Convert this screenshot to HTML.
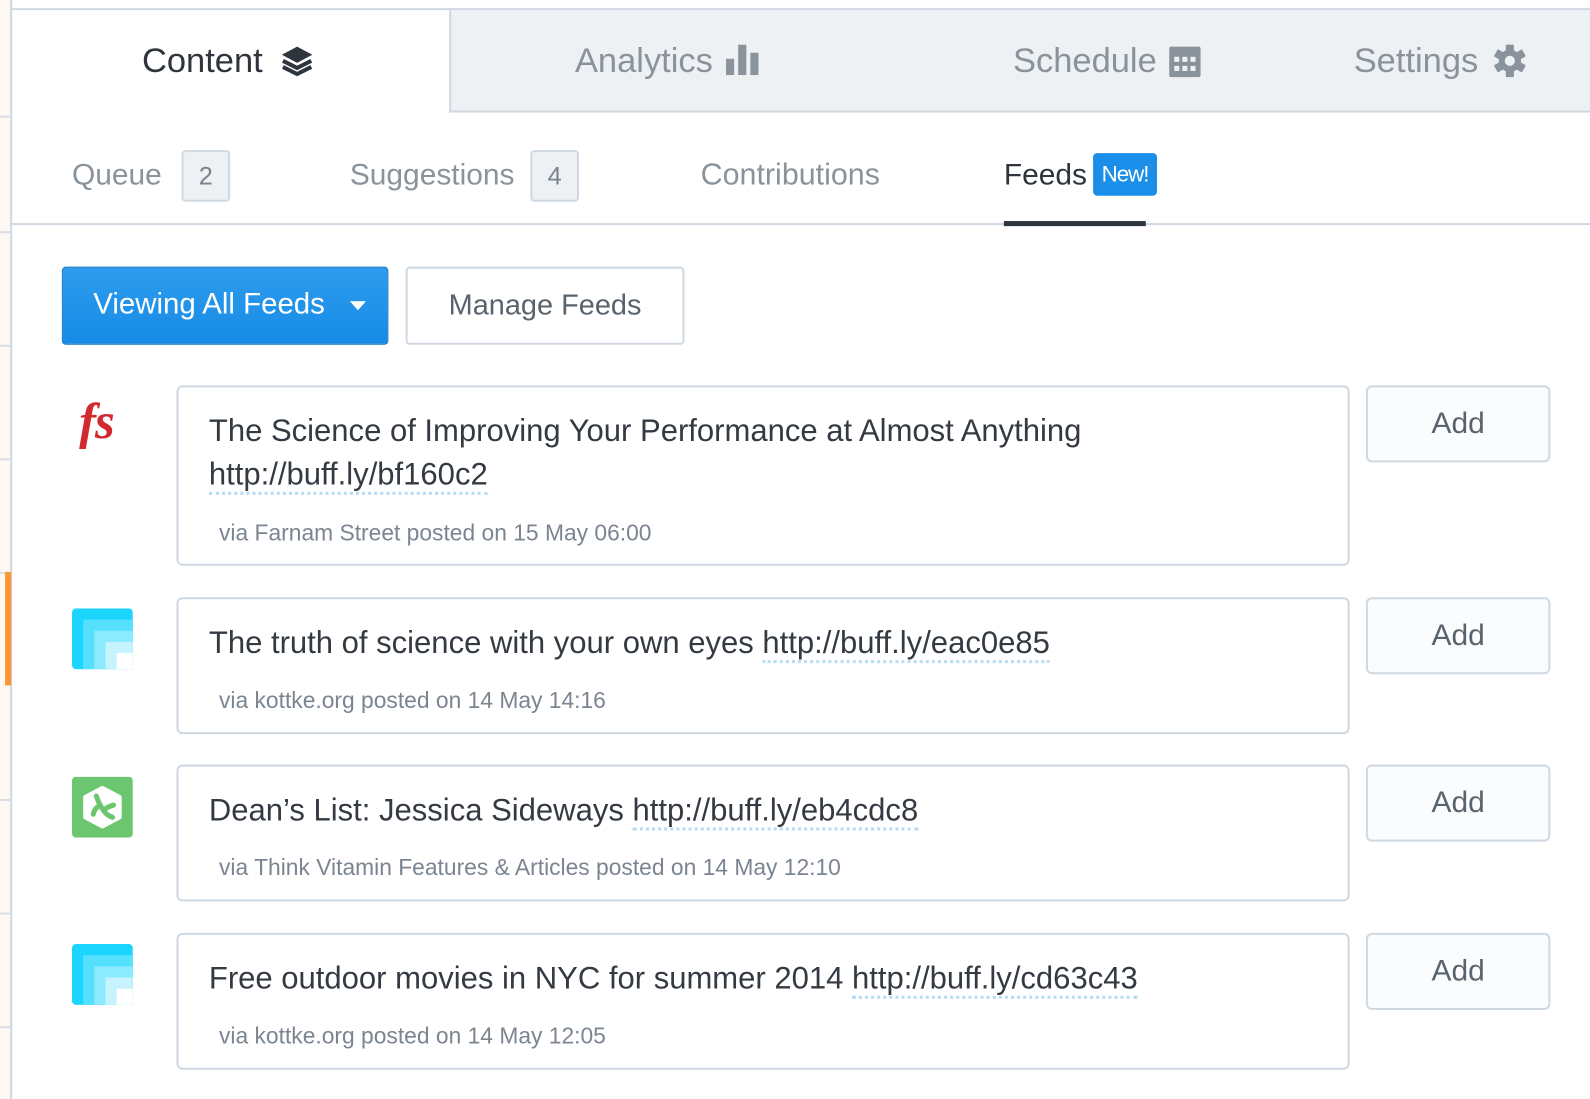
<!DOCTYPE html>
<html><head><meta charset="utf-8"><style>
*{margin:0;padding:0;box-sizing:border-box}
body{width:1590px;height:1084px;background:#fff;font-family:"Liberation Sans",sans-serif;position:relative;overflow:hidden}
#w{position:absolute;left:0;top:0;width:1568px;height:1069px;transform:scale(1.014);transform-origin:0 0}
.a{position:absolute}
.t{position:absolute;white-space:nowrap}
.card{position:absolute;left:174px;width:1157px;border:2px solid #d0d8e2;border-radius:6px;background:#fff}
.add{position:absolute;left:1347px;width:182px;height:76px;border:2px solid #d0d8e2;border-radius:6px;background:#fbfcfd;color:#59636e;font-size:29.5px;text-align:center;line-height:72px}
.ttl{position:absolute;left:30px;font-size:30.6px;line-height:43px;color:#343a42;white-space:nowrap}
.lnk{border-bottom:3px dotted #b9dcf5}
.meta{position:absolute;left:40px;font-size:22.5px;color:#7b8591;white-space:nowrap}
</style></head><body><div id="w">
<div class="a" style="left:0;top:0;width:10px;height:1084px;background:#fdf8f2"></div>
<div class="a" style="left:10px;top:0;width:2px;height:1084px;background:#d0d8e2"></div>
<div class="a" style="left:0;top:114px;width:10px;height:2px;background:#d8dee6"></div>
<div class="a" style="left:0;top:228px;width:10px;height:2px;background:#d8dee6"></div>
<div class="a" style="left:0;top:340px;width:10px;height:2px;background:#d8dee6"></div>
<div class="a" style="left:0;top:452px;width:10px;height:2px;background:#d8dee6"></div>
<div class="a" style="left:0;top:564px;width:10px;height:2px;background:#d8dee6"></div>
<div class="a" style="left:0;top:788px;width:10px;height:2px;background:#d8dee6"></div>
<div class="a" style="left:0;top:900px;width:10px;height:2px;background:#d8dee6"></div>
<div class="a" style="left:0;top:1012px;width:10px;height:2px;background:#d8dee6"></div>
<div class="a" style="left:5px;top:564px;width:6px;height:112px;background:#fb9337"></div>

<div class="a" style="left:10px;top:8px;width:1580px;height:2px;background:#d0d8e2"></div>
<div class="a" style="left:443px;top:10px;width:1147px;height:101px;background:#eef1f4;border-left:2px solid #d0d8e2;border-bottom:2px solid #d0d8e2"></div>
<div class="t" style="left:140px;top:41px;font-size:34px;color:#2f353c">Content</div>
<svg class="a" style="left:276px;top:44px" width="34" height="32" viewBox="0 0 34 32"><path d="M17 2 L32 10 L17 18 L2 10Z" fill="#2f353c"/><path d="M3 16 L17 23 L31 16" stroke="#2f353c" stroke-width="4" fill="none"/><path d="M3 22 L17 29 L31 22" stroke="#2f353c" stroke-width="4" fill="none"/></svg>
<div class="t" style="left:567px;top:41px;font-size:34px;color:#8a939c">Analytics</div>
<svg class="a" style="left:716px;top:44px" width="34" height="32"><rect x="0" y="14" width="8" height="16" fill="#8a939c"/><rect x="12" y="0" width="8" height="30" fill="#8a939c"/><rect x="24" y="8" width="8" height="22" fill="#8a939c"/></svg>
<div class="t" style="left:999px;top:41px;font-size:34px;color:#8a939c">Schedule</div>
<svg class="a" style="left:1153px;top:43px" width="32" height="34"><rect x="0" y="3" width="31" height="30" rx="2" fill="#8a939c"/><g fill="#eef1f4"><rect x="5" y="13" width="5" height="5"/><rect x="13" y="13" width="5" height="5"/><rect x="21" y="13" width="5" height="5"/><rect x="5" y="22" width="5" height="5"/><rect x="13" y="22" width="5" height="5"/><rect x="21" y="22" width="5" height="5"/></g></svg>
<div class="t" style="left:1335px;top:41px;font-size:34px;color:#8a939c">Settings</div>
<svg class="a" style="left:1472px;top:43px" width="34" height="34" viewBox="0 0 34 34"><g fill="#8a939c"><circle cx="17" cy="17" r="11"/><rect x="13" y="1" width="8" height="32" rx="1"/><rect x="13" y="1" width="8" height="32" rx="1" transform="rotate(60 17 17)"/><rect x="13" y="1" width="8" height="32" rx="1" transform="rotate(120 17 17)"/></g><circle cx="17" cy="17" r="5" fill="#eef1f4"/></svg>

<div class="t" style="left:71px;top:156px;font-size:29.5px;color:#8a939c">Queue</div>
<div class="a" style="left:179px;top:148px;width:48px;height:51px;background:#eef1f4;border:2px solid #d0d8e2;border-radius:4px;font-size:25px;color:#79838d;text-align:center;line-height:48px">2</div>
<div class="t" style="left:345px;top:156px;font-size:29.5px;color:#8a939c">Suggestions</div>
<div class="a" style="left:523px;top:148px;width:48px;height:51px;background:#eef1f4;border:2px solid #d0d8e2;border-radius:4px;font-size:25px;color:#79838d;text-align:center;line-height:48px">4</div>
<div class="t" style="left:691px;top:156px;font-size:30px;color:#8a939c">Contributions</div>
<div class="t" style="left:990px;top:156px;font-size:29.5px;color:#2f353c">Feeds</div>
<div class="a" style="left:1078px;top:151px;width:63px;height:42px;background:#1a8ee8;border-radius:4px;color:#fff;font-size:22px;text-align:center;line-height:42px;letter-spacing:-1px">New!</div>
<div class="a" style="left:12px;top:220px;width:1578px;height:2px;background:#d0d8e2"></div>
<div class="a" style="left:990px;top:218px;width:140px;height:5px;background:#2f353c"></div>

<div class="a" style="left:61px;top:263px;width:322px;height:77px;background:linear-gradient(#2e9cee,#168be6);border:1px solid #1478c6;border-radius:4px"></div>
<div class="t" style="left:92px;top:284px;font-size:29px;color:#fff">Viewing All Feeds</div>
<svg class="a" style="left:345px;top:297px" width="16" height="10"><path d="M0 0 L16 0 L8 9Z" fill="#fff"/></svg>
<div class="a" style="left:400px;top:263px;width:275px;height:77px;border:2px solid #d0d8e2;border-radius:4px;background:#fff;color:#59636e;font-size:28.5px;text-align:center;line-height:73px">Manage Feeds</div>

<div class="t" style="left:78px;top:386px;font-family:'Liberation Serif',serif;font-style:italic;font-weight:bold;font-size:50px;color:#d1292e;letter-spacing:-1px">fs</div>
<div class="card" style="top:380px;height:178px">
<div class="ttl" style="top:22px">The Science of Improving Your Performance at Almost Anything</div>
<div class="ttl" style="top:65px"><span class="lnk">http://buff.ly/bf160c2</span></div>
<div class="meta" style="top:131px">via Farnam Street posted on 15 May 06:00</div>
</div>
<div class="add" style="top:380px">Add</div>

<svg class="a" style="left:71px;top:600px" width="60" height="60"><rect width="60" height="60" rx="4" fill="#1bd5fe"/><rect x="11" y="11" width="49" height="49" fill="#55e0fe"/><rect x="22" y="22" width="38" height="38" fill="#8beafe"/><rect x="33" y="33" width="27" height="27" fill="#c5f4fe"/><rect x="44" y="44" width="16" height="16" fill="#fff"/></svg>
<div class="card" style="top:589px;height:135px">
<div class="ttl" style="top:22px">The truth of science with your own eyes <span class="lnk">http://buff.ly/eac0e85</span></div>
<div class="meta" style="top:87px">via kottke.org posted on 14 May 14:16</div>
</div>
<div class="add" style="top:589px">Add</div>

<svg class="a" style="left:71px;top:766px" width="60" height="60" viewBox="0 0 60 60"><rect width="60" height="60" rx="4" fill="#6bc66f"/><path d="M30 11 L47 20 L47 40 L30 49 L13 40 L13 20Z" fill="#fff" stroke="#fff" stroke-width="4" stroke-linejoin="round"/><path d="M24 19 Q27 28 31 33 Q34 38 40 40 M31 33 Q36 29 41 28 M28 28 Q22 31 21 37" stroke="#6bc66f" stroke-width="5" fill="none" stroke-linecap="round"/></svg>
<div class="card" style="top:754px;height:135px">
<div class="ttl" style="top:22px">Dean’s List: Jessica Sideways <span class="lnk">http://buff.ly/eb4cdc8</span></div>
<div class="meta" style="top:87px">via Think Vitamin Features &amp; Articles posted on 14 May 12:10</div>
</div>
<div class="add" style="top:754px">Add</div>

<svg class="a" style="left:71px;top:931px" width="60" height="60"><rect width="60" height="60" rx="4" fill="#1bd5fe"/><rect x="11" y="11" width="49" height="49" fill="#55e0fe"/><rect x="22" y="22" width="38" height="38" fill="#8beafe"/><rect x="33" y="33" width="27" height="27" fill="#c5f4fe"/><rect x="44" y="44" width="16" height="16" fill="#fff"/></svg>
<div class="card" style="top:920px;height:135px">
<div class="ttl" style="top:22px">Free outdoor movies in NYC for summer 2014 <span class="lnk">http://buff.ly/cd63c43</span></div>
<div class="meta" style="top:87px">via kottke.org posted on 14 May 12:05</div>
</div>
<div class="add" style="top:920px">Add</div>
</div></body></html>
